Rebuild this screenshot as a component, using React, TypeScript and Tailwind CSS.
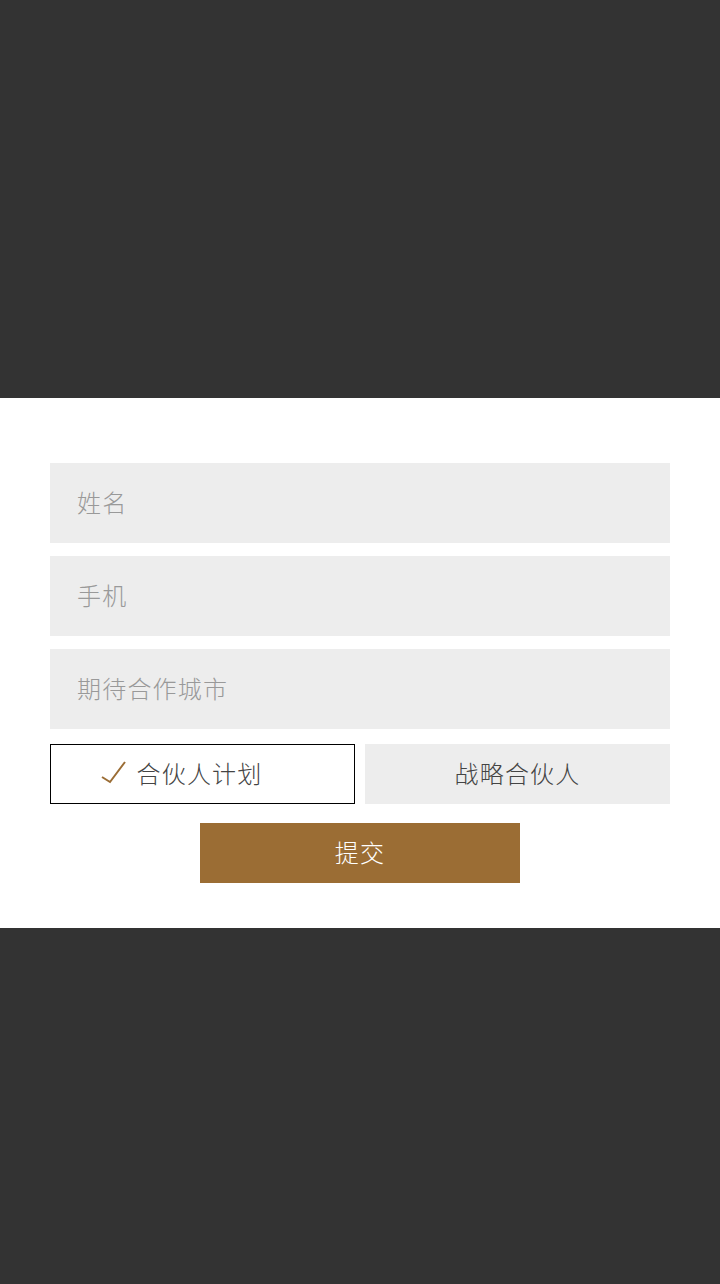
import React, { useState } from 'react';

const FONT = "font-['Noto_Sans_CJK_SC','Noto_Sans',sans-serif]";

const App: React.FC = () => {
  const [plan, setPlan] = useState<'partner' | 'strategic'>('partner');

  const options: { key: 'partner' | 'strategic'; label: string }[] = [
    { key: 'partner', label: '合伙人计划' },
    { key: 'strategic', label: '战略合伙人' },
  ];

  return (
    <div className={`min-h-[1284px] w-full bg-[#333333] flex flex-col font-light tracking-[1.2px] ${FONT}`}>
      <div className="h-[398px]" />
      <div className="bg-white h-[530px] px-[50px] pt-[65px]">
        <div className="flex flex-col gap-[13px]">
          {['姓名', '手机', '期待合作城市'].map((p) => (
            <input
              key={p}
              placeholder={p}
              className="h-[80px] w-full bg-[#ededed] pl-[27px] pr-[27px] pb-[4px] text-[24px] text-[#333] placeholder:text-[#999] outline-none"
            />
          ))}
        </div>

        <div className="mt-[15px] grid grid-cols-2 gap-[10px]">
          {options.map((o) => {
            const active = plan === o.key;
            return (
              <button
                key={o.key}
                onClick={() => setPlan(o.key)}
                className={`h-[60px] flex items-center justify-center pb-[3px] text-[24px] text-[#444] ${
                  active ? 'bg-white border border-black' : 'bg-[#ededed] border border-[#ededed]'
                }`}
              >
                <span className={`relative ${active ? 'mr-[6px]' : ''}`}>
                  {active && (
                    <svg
                      width="26"
                      height="24"
                      viewBox="0 0 26 24"
                      className="absolute right-full top-1/2 -translate-y-1/2 mr-[10px]"
                    >
                      <path d="M1 16 L9 21 L24 1" fill="none" stroke="#9b6d35" strokeWidth="2" />
                    </svg>
                  )}
                  {o.label}
                </span>
              </button>
            );
          })}
        </div>

        <div className="mt-[19px] flex justify-center">
          <button className="h-[60px] w-[320px] pb-[3px] bg-[#9b6d34] text-white text-[24px]">提交</button>
        </div>
      </div>
      <div className="flex-1" />
    </div>
  );
};

export default App;
